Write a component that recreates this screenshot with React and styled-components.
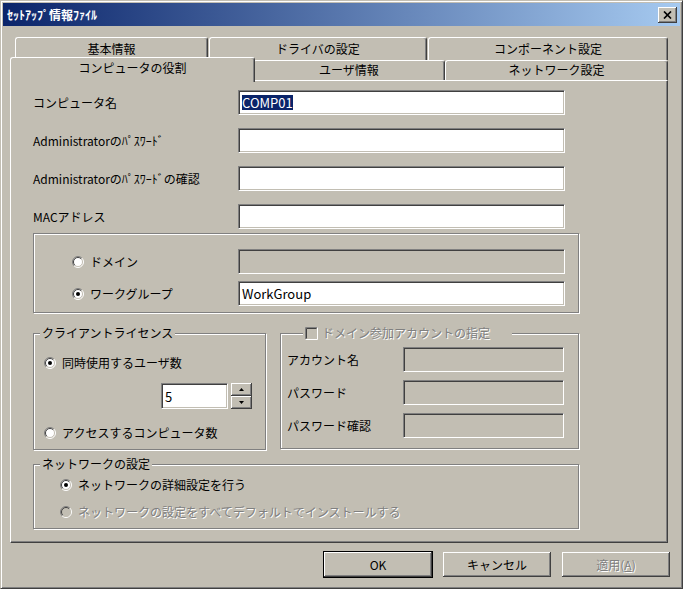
import React from "react";
import styled, { createGlobalStyle } from "styled-components";

const BG = "#c2beb3";

const GlobalStyle = createGlobalStyle`
  body {
    margin: 0;
    background: ${BG};
    font-family: "Noto Sans CJK JP", "Noto Sans", sans-serif;
    font-size: 12px;
    color: #000;
  }
`;

const Window = styled.div`
  width: 683px;
  height: 589px;
  box-sizing: border-box;
  background: ${BG};
  border: 1px solid;
  border-color: ${BG} #404040 #404040 ${BG};
  box-shadow: inset 1px 1px 0 #fff, inset -1px -1px 0 #808080;
  padding: 2px;
  display: flex;
  flex-direction: column;
`;

const TitleBar = styled.div`
  height: 23px;
  flex-shrink: 0;
  background: linear-gradient(to right, #0a246a, #a6caf0);
  display: flex;
  align-items: center;
  justify-content: space-between;
  padding: 0 3px 0 4px;
  color: #fff;
  font-weight: bold;
  font-size: 12px;
`;

const CloseButton = styled.div`
  width: 19px;
  height: 16px;
  background: ${BG};
  box-shadow: inset -1px -1px 0 #404040, inset 1px 1px 0 #fff,
    inset -2px -2px 0 #808080;
  display: flex;
  align-items: center;
  justify-content: center;
`;

const Content = styled.div`
  padding: 11px 12px 0 7px;
  display: flex;
  flex-direction: column;
`;

const TabRow = styled.div`
  display: flex;
  align-items: flex-end;
  height: ${(p) => (p.$back ? 23 : 20)}px;
  padding-left: ${(p) => (p.$back ? 5 : 0)}px;
  gap: ${(p) => (p.$back ? 1 : 0)}px;
`;

const Tab = styled.div`
  width: ${(p) => p.$w}px;
  height: ${(p) => (p.$active ? 25 : p.$back ? 23 : 20)}px;
  box-sizing: border-box;
  background: ${BG};
  border-left: 1px solid #fff;
  border-top: 1px solid #fff;
  border-right: 1px solid #404040;
  box-shadow: inset -1px 0 0 #808080;
  border-radius: 3px 3px 0 0;
  text-align: center;
  line-height: 16px;
  padding-top: ${(p) => (p.$active ? 2 : p.$back ? 3 : 1)}px;
  margin-bottom: ${(p) => (p.$active ? -2 : 0)}px;
  margin-right: ${(p) => (p.$active ? -2 : 0)}px;
  position: relative;
  z-index: ${(p) => (p.$active ? 2 : 1)};
`;

const Panel = styled.div`
  height: 463px;
  box-sizing: border-box;
  border: 1px solid;
  border-color: #fff #404040 #404040 #fff;
  box-shadow: inset -1px -1px 0 #808080;
  padding: 9px 0 0 22px;
`;

const FormGrid = styled.div`
  display: grid;
  grid-template-columns: ${(p) => p.$cols};
  row-gap: ${(p) => p.$gap}px;
  align-items: center;
  padding: ${(p) => p.$pad || "0"};
`;

const Label = styled.span`
  line-height: 16px;
  white-space: nowrap;
`;

const TextBox = styled.div`
  width: ${(p) => p.$w}px;
  height: ${(p) => p.$h || 25}px;
  box-sizing: border-box;
  background: ${(p) => (p.$disabled ? BG : "#fff")};
  border: 1px solid;
  border-color: #808080 #fff #fff #808080;
  box-shadow: inset 1px 1px 0 #404040, inset -1px -1px 0 ${BG};
  padding-left: 3px;
  display: flex;
  align-items: center;
  font-size: 13px;
  white-space: nowrap;
`;

const Selected = styled.span`
  background: #0a246a;
  color: #fff;
  line-height: 15px;
`;

const GroupBox = styled.div`
  position: relative;
  box-sizing: border-box;
  width: ${(p) => p.$w}px;
  height: ${(p) => p.$h}px;
  margin-top: ${(p) => p.$mt || 0}px;
  border: 1px solid #808080;
  box-shadow: 1px 1px 0 #fff, inset 1px 1px 0 #fff;
`;

const GroupTitle = styled.div`
  position: absolute;
  top: -9px;
  left: ${(p) => p.$left || 6}px;
  padding: 0 ${(p) => p.$padRight || 2}px 0 2px;
  background: ${BG};
  line-height: 16px;
  display: flex;
  align-items: center;
  gap: 4px;
  color: ${(p) => (p.$disabled ? "#808080" : "#000")};
  text-shadow: ${(p) => (p.$disabled ? "1px 1px 0 #fff" : "none")};
  white-space: nowrap;
`;

const OptionRow = styled.div`
  display: flex;
  align-items: center;
  gap: ${(p) => p.$gap || 6}px;
  height: 16px;
  line-height: 16px;
  white-space: nowrap;
  color: ${(p) => (p.$disabled ? "#808080" : "#000")};
  text-shadow: ${(p) => (p.$disabled ? "1px 1px 0 #fff" : "none")};
`;

const BottomRow = styled.div`
  display: flex;
  gap: 14px;
  margin-top: 20px;
`;

const Column = styled.div`
  display: flex;
  flex-direction: column;
  padding: ${(p) => p.$pad};
`;

const SpinWrap = styled.div`
  display: flex;
  gap: 3px;
  margin: 12px 0 16px 117px;
`;

const SpinButtons = styled.div`
  display: flex;
  flex-direction: column;
`;

const SpinButton = styled.div`
  width: 21px;
  height: 13px;
  box-sizing: border-box;
  background: ${BG};
  box-shadow: inset -1px -1px 0 #404040, inset 1px 1px 0 #fff,
    inset -2px -2px 0 #808080;
  display: flex;
  align-items: center;
  justify-content: center;
`;

const ButtonRow = styled.div`
  display: flex;
  justify-content: flex-end;
  gap: 9px;
  padding: 8px 9px 0 0;
`;

const Button = styled.div`
  width: 110px;
  height: 27px;
  box-sizing: border-box;
  background: ${BG};
  border: 1px solid ${(p) => (p.$default ? "#000" : "transparent")};
  box-shadow: inset -1px -1px 0 #404040, inset 1px 1px 0 #fff,
    inset -2px -2px 0 #808080;
  display: flex;
  align-items: center;
  justify-content: center;
  font-size: 12px;
  color: ${(p) => (p.$disabled ? "#808080" : "#000")};
  text-shadow: ${(p) => (p.$disabled ? "1px 1px 0 #fff" : "none")};
`;

function Radio({ checked, disabled }) {
  return (
    <svg width="12" height="12" viewBox="0 0 12 12">
      <circle cx="6" cy="6" r="5" fill={disabled ? BG : "#fff"} />
      <path d="M2.1 9.9 A5.5 5.5 0 0 1 9.9 2.1" fill="none" stroke="#808080" />
      <path d="M9.9 2.1 A5.5 5.5 0 0 1 2.1 9.9" fill="none" stroke="#fff" />
      <path d="M2.8 9.2 A4.5 4.5 0 0 1 9.2 2.8" fill="none" stroke="#404040" />
      <path d="M9.2 2.8 A4.5 4.5 0 0 1 2.8 9.2" fill="none" stroke={BG} />
      {checked && <circle cx="6" cy="6" r="2" fill={disabled ? "#808080" : "#000"} />}
    </svg>
  );
}

function CheckBox() {
  return (
    <svg width="13" height="13" viewBox="0 0 13 13">
      <rect x="0" y="0" width="13" height="13" fill={BG} />
      <path d="M0.5 12.5 V0.5 H12.5" fill="none" stroke="#808080" />
      <path d="M12.5 0.5 V12.5 H0.5" fill="none" stroke="#fff" />
      <path d="M1.5 11.5 V1.5 H11.5" fill="none" stroke="#404040" />
    </svg>
  );
}

function Arrow({ up }) {
  return (
    <svg width="5" height="3" viewBox="0 0 5 3">
      <polygon points={up ? "0,3 2.5,0 5,3" : "0,0 5,0 2.5,3"} fill="#000" />
    </svg>
  );
}

export default function App() {
  return (
    <>
      <GlobalStyle />
      <Window>
        <TitleBar>
          <span>ｾｯﾄｱｯﾌﾟ情報ﾌｧｲﾙ</span>
          <CloseButton>
            <svg width="9" height="8" viewBox="0 0 9 8">
              <path d="M1 0.5 L8 7.5 M8 0.5 L1 7.5" stroke="#000" strokeWidth="1.7" />
            </svg>
          </CloseButton>
        </TitleBar>

        <Content>
          <TabRow $back>
            <Tab $back $w={193}>基本情報</Tab>
            <Tab $back $w={218}>ドライバの設定</Tab>
            <Tab $back $w={240}>コンポーネント設定</Tab>
          </TabRow>
          <TabRow>
            <Tab $active $w={245}>コンピュータの役割</Tab>
            <Tab $w={192}>ユーザ情報</Tab>
            <Tab $w={223}>ネットワーク設定</Tab>
          </TabRow>

          <Panel>
            <FormGrid $cols="205px 327px" $gap={13}>
              <Label>コンピュータ名</Label>
              <TextBox $w={327}>
                <Selected>COMP01</Selected>
              </TextBox>
              <Label>Administratorのﾊﾟｽﾜｰﾄﾞ</Label>
              <TextBox $w={327} />
              <Label>Administratorのﾊﾟｽﾜｰﾄﾞの確認</Label>
              <TextBox $w={327} />
              <Label>MACアドレス</Label>
              <TextBox $w={327} />
            </FormGrid>

            <GroupBox $w={546} $h={80} $mt={4}>
              <FormGrid $cols="166px 327px" $gap={7} $pad="15px 0 0 38px">
                <OptionRow>
                  <Radio />
                  <span>ドメイン</span>
                </OptionRow>
                <TextBox $w={327} $disabled />
                <OptionRow>
                  <Radio checked />
                  <span>ワークグループ</span>
                </OptionRow>
                <TextBox $w={327}>WorkGroup</TextBox>
              </FormGrid>
            </GroupBox>

            <BottomRow>
              <GroupBox $w={233} $h={117}>
                <GroupTitle>クライアントライセンス</GroupTitle>
                <Column $pad="21px 0 0 10px">
                  <OptionRow>
                    <Radio checked />
                    <span>同時使用するユーザ数</span>
                  </OptionRow>
                  <SpinWrap>
                    <TextBox $w={67} $h={26}>5</TextBox>
                    <SpinButtons>
                      <SpinButton>
                        <Arrow up />
                      </SpinButton>
                      <SpinButton>
                        <Arrow />
                      </SpinButton>
                    </SpinButtons>
                  </SpinWrap>
                  <OptionRow>
                    <Radio />
                    <span>アクセスするコンピュータ数</span>
                  </OptionRow>
                </Column>
              </GroupBox>

              <GroupBox $w={299} $h={116}>
                <GroupTitle $left={22} $padRight={22} $disabled>
                  <CheckBox />
                  <span>ドメイン参加アカウントの指定</span>
                </GroupTitle>
                <FormGrid $cols="116px 161px" $gap={8} $pad="13px 0 0 6px">
                  <Label>アカウント名</Label>
                  <TextBox $w={161} $disabled />
                  <Label>パスワード</Label>
                  <TextBox $w={161} $disabled />
                  <Label>パスワード確認</Label>
                  <TextBox $w={161} $disabled />
                </FormGrid>
              </GroupBox>
            </BottomRow>

            <GroupBox $w={546} $h={65} $mt={14}>
              <GroupTitle>ネットワークの設定</GroupTitle>
              <Column $pad="12px 0 0 26px" style={{ gap: 11 }}>
                <OptionRow>
                  <Radio checked />
                  <span>ネットワークの詳細設定を行う</span>
                </OptionRow>
                <OptionRow $disabled>
                  <Radio disabled />
                  <span>ネットワークの設定をすべてデフォルトでインストールする</span>
                </OptionRow>
              </Column>
            </GroupBox>
          </Panel>
        </Content>

        <ButtonRow>
          <Button $default>OK</Button>
          <Button>キャンセル</Button>
          <Button $disabled>
            <span>
              適用(<u>A</u>)
            </span>
          </Button>
        </ButtonRow>
      </Window>
    </>
  );
}
